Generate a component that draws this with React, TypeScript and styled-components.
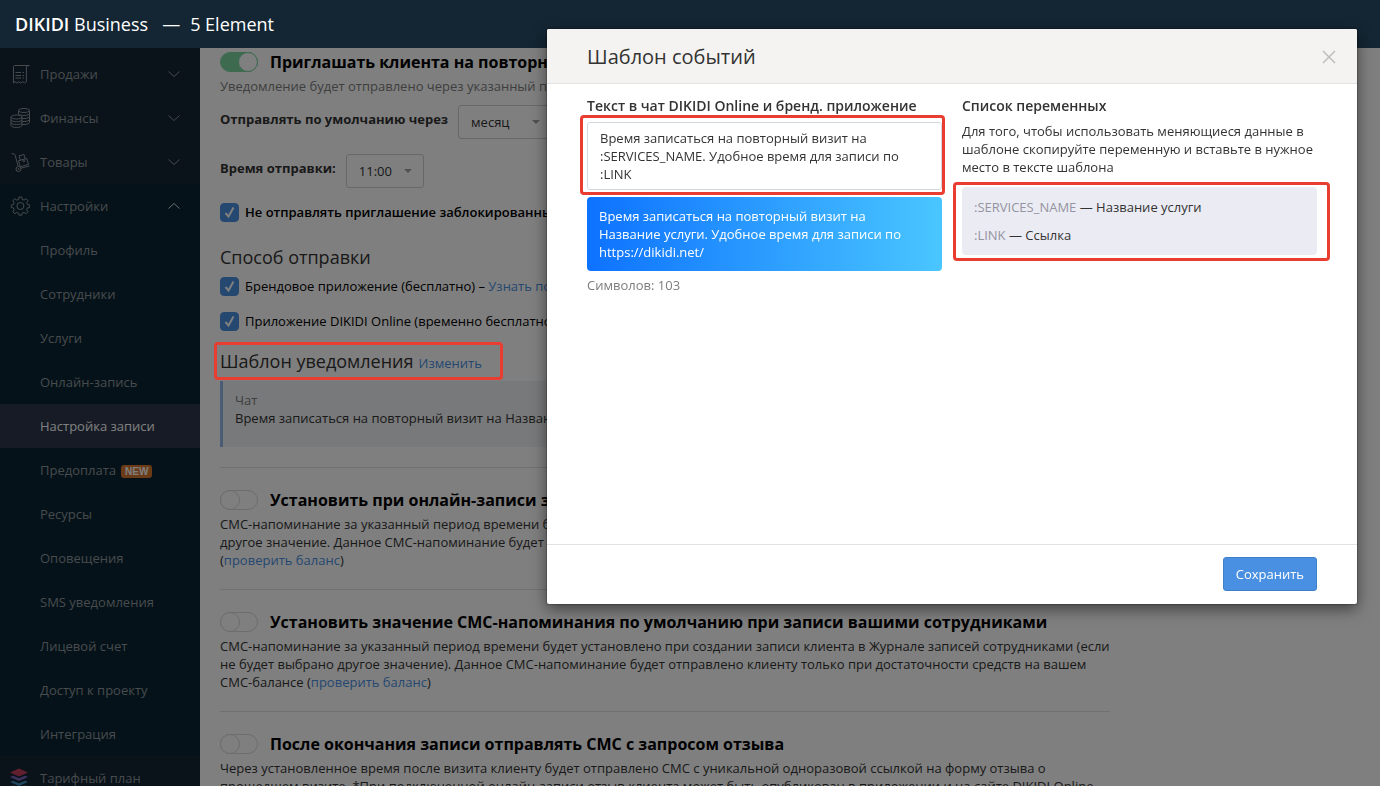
import React, { useState } from "react";
import styled, { createGlobalStyle, css } from "styled-components";

const color = {
  navy: "#142633",
  navyDeep: "#0a2532",
  active: "#2c374a",
  menu: "#8f969c",
  link: "#4a90e2",
  linkDark: "#3f7fc8",
  text: "#333333",
  muted: "#7d7d7d",
  line: "#e2e2e2",
  mark: "#e83d30",
};

const GlobalStyle = createGlobalStyle`
  *, *::before, *::after { box-sizing: border-box; }
  body {
    margin: 0;
    height: 100vh;
    overflow: hidden;
    background: #fff;
    color: ${color.text};
    font: 13px/18px "Open Sans", "Noto Sans", sans-serif;
  }
  button, select, textarea { font: inherit; color: inherit; }
  h1, h2, h3, p, ul { margin: 0; padding: 0; }
  ul { list-style: none; }
`;

const Page = styled.div`
  display: flex;
  flex-direction: column;
  height: 100vh;
`;

const Header = styled.header`
  position: relative;
  z-index: 20;
  display: flex;
  flex: none;
  align-items: center;
  gap: 10px;
  height: 48px;
  padding: 0 15px;
  background: ${color.navy};
  color: #fff;
  font-size: 18px;
  line-height: 24px;
`;

const Brand = styled.a`
  margin-right: 4px;
  color: inherit;
  text-decoration: none;
  & b {
    font-weight: 600;
  }
`;

const Columns = styled.div`
  display: flex;
  flex: 1;
  min-height: 0;
`;

const Sidebar = styled.nav`
  flex: none;
  width: 200px;
  padding-top: 4px;
  overflow: hidden;
  background: ${color.navy};
`;

const MenuGroup = styled.ul<{ $open?: boolean }>`
  background: ${(p) => (p.$open ? color.navyDeep : "transparent")};
`;

const MenuLink = styled.a<{ $active?: boolean }>`
  display: flex;
  align-items: center;
  height: 44px;
  padding: 0 20px 0 10px;
  background: ${(p) => (p.$active ? color.active : "transparent")};
  color: ${(p) => (p.$active ? "#fff" : color.menu)};
  text-decoration: none;
`;

const MenuIcon = styled.span`
  display: flex;
  flex: none;
  width: 30px;
`;

const MenuText = styled.span`
  flex: 1;
`;

const NewBadge = styled.span`
  display: inline-block;
  margin-left: 5px;
  padding: 0 4px;
  border-radius: 3px;
  background: #d4762c;
  color: #fff;
  font: bold 10px/13px "Liberation Sans", Arial, sans-serif;
`;

const Main = styled.main`
  flex: 1;
  min-width: 0;
  padding: 4px 20px 0;
  overflow: hidden;
`;

const Content = styled.div`
  max-width: 890px;
`;

const Section = styled.section`
  & + & {
    margin-top: 20px;
    padding-top: 22px;
    border-top: 1px solid ${color.line};
  }
`;

const SwitchRow = styled.label`
  display: flex;
  align-items: center;
  gap: 12px;
  height: 20px;
  color: #000;
  font-size: 16px;
  font-weight: 700;
  white-space: nowrap;
`;

const Switch = styled.input`
  appearance: none;
  flex: none;
  display: flex;
  width: 38px;
  height: 20px;
  margin: 0;
  border: 1px solid #dadada;
  border-radius: 10px;
  background: #fff;
  &::before {
    content: "";
    width: 20px;
    height: 20px;
    margin: -1px;
    border: 1px solid #dadada;
    border-radius: 50%;
    background: #fff;
  }
  &:checked {
    justify-content: flex-end;
    border-color: #7dd6a0;
    background: #7dd6a0;
  }
  &:checked::before {
    border-color: #7dd6a0;
  }
`;

const Note = styled.p<{ $muted?: boolean }>`
  margin-top: 5px;
  color: ${(p) => (p.$muted ? color.muted : color.text)};
`;

const VariablesNote = styled(Note)`
  margin-top: 7px;
`;

const TextLink = styled.a`
  color: ${color.link};
  text-decoration: none;
`;

const Field = styled.div`
  display: flex;
  gap: 10px;
  margin-top: 15px;
  & > label {
    padding-top: 5px;
    font-weight: 700;
  }
`;

const FirstField = styled(Field)`
  margin-top: 10px;
`;

const SelectBox = styled.div<{ $width: number }>`
  position: relative;
  width: ${(p) => p.$width}px;
  &::after {
    content: "";
    position: absolute;
    top: 15px;
    right: 12px;
    border: 4px solid transparent;
    border-top-color: #9aa2ac;
    border-bottom: 0;
    pointer-events: none;
  }
`;

const Select = styled.select`
  appearance: none;
  display: block;
  width: 100%;
  height: 34px;
  padding: 0 12px;
  border: 1px solid #d0d0d0;
  border-radius: 3px;
  background: #fff;
`;

const CheckRow = styled.label<{ $strong?: boolean }>`
  display: flex;
  align-items: flex-start;
  gap: 6px;
  height: 19px;
  margin-top: ${(p) => (p.$strong ? 15 : 16)}px;
  color: #000;
  font-weight: ${(p) => (p.$strong ? 600 : 400)};
  white-space: nowrap;
`;

const CheckMark = styled.span`
  position: relative;
  flex: none;
  display: flex;
  width: 19px;
  height: 19px;
  & svg {
    position: absolute;
    inset: 0;
    pointer-events: none;
  }
`;

const Checkbox = styled.input`
  appearance: none;
  width: 19px;
  height: 19px;
  margin: 0;
  border: 1px solid #ccc;
  border-radius: 4px;
  background: #fff;
  &:checked {
    border-color: ${color.link};
    background: ${color.link};
  }
`;

const Subheading = styled.h2`
  font-size: 18px;
  font-weight: 400;
  line-height: 24px;
`;

const DeliveryHeading = styled(Subheading)`
  margin: 23px 0 -8px;
`;

const TemplateHeading = styled.div`
  margin: 18px 0 8px;
  display: flex;
`;

const marked = css`
  position: relative;
  &::after {
    content: "";
    position: absolute;
    border: 3px solid ${color.mark};
    border-radius: 4px;
    pointer-events: none;
    z-index: 15;
  }
`;

const MarkedTitle = styled.div`
  ${marked}
  display: flex;
  align-items: baseline;
  gap: 5px;
  &::after {
    inset: -7px -21px -7px -6px;
  }
`;

const Quote = styled.blockquote`
  min-height: 66px;
  margin: 0;
  padding: 10px 12px;
  border-left: 3px solid #93b9e6;
  background: #f0f2f6;
`;

const QuoteSource = styled.div`
  color: ${color.muted};
`;

const Backdrop = styled.div`
  position: fixed;
  inset: 0;
  z-index: 10;
  background: rgba(0, 0, 0, 0.5);
`;

const DialogLayer = styled.div`
  position: fixed;
  inset: 0;
  z-index: 30;
  display: flex;
  align-items: flex-start;
  justify-content: flex-end;
  padding: 29px 23px 0 0;
`;

const Dialog = styled.div`
  display: flex;
  flex-direction: column;
  width: 810px;
  max-width: 100%;
  border-radius: 2px;
  background: #fff;
  box-shadow: 0 5px 15px rgba(0, 0, 0, 0.5), 0 0 1px 1px rgba(0, 0, 0, 0.2);
  overflow: hidden;
`;

const DialogHeader = styled.div`
  display: flex;
  align-items: center;
  justify-content: space-between;
  height: 55px;
  padding: 2px 20px 0 40px;
  border-bottom: 1px solid ${color.line};
  background: #f4f3f1;
`;

const DialogTitle = styled.h1`
  color: #333;
  font-size: 20px;
  font-weight: 400;
  line-height: 28px;
`;

const CloseButton = styled.button`
  display: flex;
  padding: 0;
  border: 0;
  background: none;
  color: #bdbdbd;
  cursor: pointer;
`;

const DialogBody = styled.div`
  display: grid;
  grid-template-columns: 1fr 1fr;
  gap: 20px;
  min-height: 460px;
  padding: 13px 40px;
`;

const FieldTitle = styled.h3`
  color: ${color.text};
  font-size: 14px;
  font-weight: 600;
  line-height: 18px;
`;

const EditorFrame = styled.div`
  ${marked}
  margin: 7px 0;
  &::after {
    inset: -7px -3px -5px -7px;
  }
`;

const Editor = styled.textarea`
  display: block;
  width: 100%;
  height: 68px;
  padding: 6px 12px;
  border: 1px solid #d3d8e0;
  border-radius: 3px;
  resize: none;
  overflow: hidden;
`;

const Preview = styled.div`
  padding: 10px 12px;
  border-radius: 4px;
  background: linear-gradient(90deg, #0d72ff, #4ac6ff);
  color: #fff;
  font-weight: 500;
`;

const VariableList = styled.ul`
  ${marked}
  display: grid;
  gap: 10px;
  margin-top: 11px;
  padding: 11px 12px;
  border-radius: 4px;
  background: #ebebf4;
  &::after {
    inset: -5px -13px -6px -9px;
  }
`;

const VariableName = styled.span`
  color: #9394a0;
`;

const DialogFooter = styled.div`
  display: flex;
  justify-content: flex-end;
  padding: 12px 40px 13px;
  border-top: 1px solid ${color.line};
`;

const SaveButton = styled.button`
  height: 34px;
  padding: 0 12px;
  border: 1px solid ${color.linkDark};
  border-radius: 3px;
  background: ${color.link};
  color: #fff;
  font-weight: 500;
  cursor: pointer;
`;

const line = {
  width: 20,
  height: 20,
  viewBox: "0 0 20 20",
  fill: "none",
  stroke: color.menu,
  strokeLinejoin: "round" as const,
};

const ReceiptIcon = () => (
  <svg {...line}>
    <path d="M3.500 3v16l1.500-1.300 1.900 1.300 1.900-1.300 1.900 1.300 1.900-1.300 1.900 1.300 1.900-1.300V4c0-1.600.8-2.500 3-2.500H5C4 1.500 3.500 2 3.500 3z" />
    <path d="M5.500 8.500h5.500M5.500 11.500h5.500M5.500 14h5.500M12.500 8.500h1.500M12.500 11.500h1.500M12.500 14h1.500" />
  </svg>
);

const CoinsIcon = () => (
  <svg {...line}>
    <ellipse cx="14" cy="2.500" rx="5.500" ry="2" />
    <path d="M8.500 2.500v4M19.500 2.500v12c0 1-2.500 2-5.500 2-.8 0-1.600 0-2.300-.2M19.500 5.500c0 1-2.500 2-5.500 2-2 0-3.600-.3-4.600-.9M19.500 8.500c0 1-2.500 2-5.500 2-.9 0-1.800 0-2.500-.2M19.500 11.500c0 1-2.500 2-5.500 2-.9 0-1.600 0-2.300-.2" />
    <ellipse cx="6.500" cy="9" rx="5.500" ry="2" />
    <path d="M1 9v8.500c0 1 2.500 2 5.500 2s5.500-1 5.500-2V9M1 11.800c0 1 2.500 2 5.500 2s5.500-1 5.500-2M1 14.600c0 1 2.500 2 5.500 2s5.500-1 5.500-2" />
  </svg>
);

const CartIcon = () => (
  <svg {...line}>
    <path d="M1.500 1.500 4 2c.7.200 1 .6 1.200 1.200l3 11.300" />
    <circle cx="8.500" cy="17" r="2.500" />
    <circle cx="8.500" cy="17" r=".5" />
    <path d="M11 16.200 19.500 14M8.500 8.700l8.200-2.200 1.800 6-8.200 2.200zM10.300 8.200 9.200 3.800l4.800-1.300 1.200 4.400M12.700 7.600l.6 2.300 1.200-.3-.6-2.300" />
  </svg>
);

const GearIcon = () => (
  <svg width="20" height="20" viewBox="0 0 24 24" fill="none" stroke={color.menu} strokeWidth="1.200" strokeLinejoin="round">
    <circle cx="12.500" cy="12" r="4.200" />
    <path d="M10.900 1.200h3.200l.5 2.800c.8.200 1.600.5 2.300.9l2.400-1.600 2.300 2.300-1.600 2.400c.4.700.7 1.500.9 2.300l2.800.5v3l-2.800.5c-.2.800-.5 1.600-.9 2.300l1.600 2.400-2.300 2.300-2.400-1.600c-.7.400-1.500.7-2.300.9l-.5 2.400h-3.200l-.5-2.400c-.8-.2-1.600-.5-2.300-.9l-2.400 1.600L3.400 19l1.600-2.400c-.4-.7-.7-1.500-.9-2.300l-2.600-.5v-3l2.600-.5c.2-.8.5-1.600.9-2.300L3.400 5.600l2.300-2.300 2.400 1.600c.7-.4 1.500-.7 2.300-.9z" />
  </svg>
);

const LayersIcon = () => (
  <svg width="18" height="20" viewBox="0 0 18 20">
    <path d="M9 .5 18 4.500 9 8.500 0 4.500z" fill="#c4405f" />
    <path d="M0 9l3-1.300 6 2.600 6-2.600L18 9l-9 4z" fill="#7d64c0" />
    <path d="M0 14l3-1.300 6 2.600 6-2.600 3 1.300-9 4z" fill="#3f8fbe" />
    <path d="M0 18.500l3-1 6 2 6-2 3 1-2 1.500H2z" fill="#36a8a8" />
  </svg>
);

const Chevron = ({ up }: { up?: boolean }) => (
  <svg width="12" height="8" viewBox="0 0 12 8" fill="none" stroke={up ? "#d5d9dc" : color.menu}>
    <path d={up ? "M.5 6.500 6 1.500l5.500 5" : "M.5 1.500 6 6.500l5.500-5"} />
  </svg>
);

const CloseIcon = () => (
  <svg width="16" height="16" viewBox="0 0 16 16" fill="none" stroke="currentColor" strokeWidth="1.500">
    <path d="M2 2l12 12M14 2 2 14" />
  </svg>
);

const topMenu = [
  { text: "Продажи", Icon: ReceiptIcon },
  { text: "Финансы", Icon: CoinsIcon },
  { text: "Товары", Icon: CartIcon },
];

const settingsMenu = [
  "Профиль",
  "Сотрудники",
  "Услуги",
  "Онлайн-запись",
  "Настройка записи",
  "Предоплата",
  "Ресурсы",
  "Оповещения",
  "SMS уведомления",
  "Лицевой счет",
  "Доступ к проекту",
  "Интеграция",
];

const variables = [
  { name: ":SERVICES_NAME", meaning: "Название услуги" },
  { name: ":LINK", meaning: "Ссылка" },
];

const Check = ({ children, strong }: { children: React.ReactNode; strong?: boolean }) => (
  <CheckRow $strong={strong}>
    <CheckMark>
      <Checkbox type="checkbox" defaultChecked />
      <svg width="19" height="19" viewBox="0 0 19 19" fill="none" stroke="#fff" strokeWidth="2">
        <path d="M5.500 10 8.500 13.500 13.500 4.500" />
      </svg>
    </CheckMark>
    <span>{children}</span>
  </CheckRow>
);

const Toggle = ({ children, on }: { children: React.ReactNode; on?: boolean }) => (
  <SwitchRow>
    <Switch type="checkbox" defaultChecked={on} />
    {children}
  </SwitchRow>
);

export default function App() {
  const [template, setTemplate] = useState(
    "Время записаться на повторный визит на :SERVICES_NAME. Удобное время для записи по :LINK"
  );
  const preview = template
    .replace(":SERVICES_NAME", "Название услуги")
    .replace(":LINK", "https://dikidi.net/");

  return (
    <Page>
      <GlobalStyle />
      <Header>
        <Brand href="#">
          <b>DIKIDI</b> Business
        </Brand>
        <span>—</span>
        <span>5 Element</span>
      </Header>

      <Columns>
        <Sidebar>
          <MenuGroup>
            {topMenu.map(({ text, Icon }) => (
              <li key={text}>
                <MenuLink href="#">
                  <MenuIcon><Icon /></MenuIcon>
                  <MenuText>{text}</MenuText>
                  <Chevron />
                </MenuLink>
              </li>
            ))}
          </MenuGroup>
          <MenuGroup $open>
            <li>
              <MenuLink href="#">
                <MenuIcon><GearIcon /></MenuIcon>
                <MenuText>Настройки</MenuText>
                <Chevron up />
              </MenuLink>
            </li>
            {settingsMenu.map((text) => (
              <li key={text}>
                <MenuLink href="#" $active={text === "Настройка записи"}>
                  <MenuIcon />
                  <MenuText>
                    {text}
                    {text === "Предоплата" && <NewBadge>NEW</NewBadge>}
                  </MenuText>
                </MenuLink>
              </li>
            ))}
          </MenuGroup>
          <MenuGroup>
            <li>
              <MenuLink href="#">
                <MenuIcon><LayersIcon /></MenuIcon>
                <MenuText>Тарифный план</MenuText>
              </MenuLink>
            </li>
          </MenuGroup>
        </Sidebar>

        <Main>
          <Content>
            <Section>
              <Toggle on>Приглашать клиента на повторный визит</Toggle>
              <Note $muted>Уведомление будет отправлено через указанный период времени</Note>
              <FirstField>
                <label htmlFor="period">Отправлять по умолчанию через</label>
                <SelectBox $width={94}>
                  <Select id="period">
                    <option>месяц</option>
                  </Select>
                </SelectBox>
              </FirstField>
              <Field>
                <label htmlFor="time">Время отправки:</label>
                <SelectBox $width={78}>
                  <Select id="time">
                    <option>11:00</option>
                  </Select>
                </SelectBox>
              </Field>
              <Check strong>Не отправлять приглашение заблокированным клиентам</Check>
              <DeliveryHeading>Способ отправки</DeliveryHeading>
              <Check>
                Брендовое приложение (бесплатно) – <TextLink href="#">Узнать подробнее</TextLink>
              </Check>
              <Check>Приложение DIKIDI Online (временно бесплатно)</Check>
              <TemplateHeading>
                <MarkedTitle>
                  <Subheading>Шаблон уведомления</Subheading>
                  <TextLink href="#">Изменить</TextLink>
                </MarkedTitle>
              </TemplateHeading>
              <Quote>
                <QuoteSource>Чат</QuoteSource>
                {preview}
              </Quote>
            </Section>

            <Section>
              <Toggle>Установить при онлайн-записи значение СМС-напоминания по умолчанию</Toggle>
              <Note>
                СМС-напоминание за указанный период времени будет установлено при создании онлайн-записи клиентом (если
                не будет выбрано другое значение. Данное СМС-напоминание будет отправлено клиенту только при
                достаточности средств на вашем СМС-балансе (<TextLink href="#">проверить&nbsp;баланс</TextLink>)
              </Note>
            </Section>

            <Section>
              <Toggle>Установить значение СМС-напоминания по умолчанию при записи вашими сотрудниками</Toggle>
              <Note>
                СМС-напоминание за указанный период времени будет установлено при создании записи клиента в Журнале
                записей сотрудниками (если не будет выбрано другое значение). Данное СМС-напоминание будет отправлено
                клиенту только при достаточности средств на вашем СМС-балансе (
                <TextLink href="#">проверить&nbsp;баланс</TextLink>)
              </Note>
            </Section>

            <Section>
              <Toggle>После окончания записи отправлять СМС с запросом отзыва</Toggle>
              <Note>
                Через установленное время после визита клиенту будет отправлено СМС с уникальной одноразовой ссылкой на
                форму отзыва о прошедшем визите. *При подключенной онлайн-записи отзыв клиента может быть опубликован в
                приложении и на сайте DIKIDI Online
              </Note>
            </Section>
          </Content>
        </Main>
      </Columns>

      <Backdrop />
      <DialogLayer>
        <Dialog role="dialog" aria-labelledby="dialog-title">
          <DialogHeader>
            <DialogTitle id="dialog-title">Шаблон событий</DialogTitle>
            <CloseButton type="button" aria-label="Закрыть">
              <CloseIcon />
            </CloseButton>
          </DialogHeader>
          <DialogBody>
            <div>
              <FieldTitle>
                <label htmlFor="template">Текст в чат DIKIDI Online и бренд. приложение</label>
              </FieldTitle>
              <EditorFrame>
                <Editor id="template" value={template} onChange={(e) => setTemplate(e.target.value)} />
              </EditorFrame>
              <Preview>{preview}</Preview>
              <Note $muted>Символов: 103</Note>
            </div>
            <div>
              <FieldTitle>Список переменных</FieldTitle>
              <VariablesNote>
                Для того, чтобы использовать меняющиеся данные в шаблоне скопируйте переменную и вставьте в нужное
                место в тексте шаблона
              </VariablesNote>
              <VariableList>
                {variables.map((v) => (
                  <li key={v.name}>
                    <VariableName>{v.name}</VariableName> — {v.meaning}
                  </li>
                ))}
              </VariableList>
            </div>
          </DialogBody>
          <DialogFooter>
            <SaveButton type="button">Сохранить</SaveButton>
          </DialogFooter>
        </Dialog>
      </DialogLayer>
    </Page>
  );
}
